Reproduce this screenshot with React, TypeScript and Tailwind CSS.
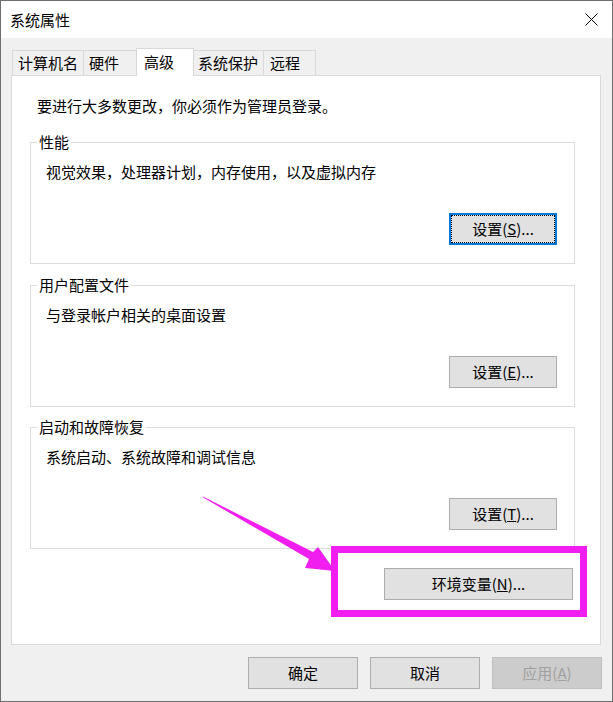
import React from "react";

function Btn({
  children,
  w,
  disabled,
  focused,
}: {
  children: React.ReactNode;
  w: string;
  disabled?: boolean;
  focused?: boolean;
}) {
  if (focused) {
    return (
      <div className={`${w} h-[32px] border-2 border-[#0078d7] bg-[#e1e1e1]`}>
        <div className="w-full h-full border border-dotted border-black flex items-center justify-center">
          {children}
        </div>
      </div>
    );
  }
  return (
    <div
      className={`${w} h-[32px] border flex items-center justify-center ${
        disabled
          ? "bg-[#cccccc] border-[#bfbfbf] text-[#a0a0a0]"
          : "bg-[#e1e1e1] border-[#adadad] text-black"
      }`}
    >
      {children}
    </div>
  );
}

function Group({
  title,
  desc,
  button,
  className,
}: {
  title: string;
  desc: string;
  button: React.ReactNode;
  className: string;
}) {
  return (
    <fieldset className={`w-[545px] ml-[18px] border border-[#dcdcdc] pb-[18px] ${className}`}>
      <legend className="ml-[6px] px-[2px] leading-[20px]">{title}</legend>
      <div className="mt-[10px] pl-[15px] leading-[20px]">{desc}</div>
      <div className="mt-[31px] flex justify-end pr-[17px]">{button}</div>
    </fieldset>
  );
}

export default function App() {
  return (
    <div className="relative w-[613px] h-[702px] border border-[#6e6e6e] bg-[#f0f0f0] flex flex-col font-['Noto_Sans_CJK_SC',sans-serif] text-[15px] leading-[20px] text-black overflow-hidden">
      {/* Title bar */}
      <div className="h-[37px] bg-white flex items-center pl-[9px] shrink-0">
        <span>系统属性</span>
        <svg className="ml-auto mr-[14px]" width="13" height="13" viewBox="0 0 13 13">
          <path d="M0.5 0.5 L12.5 12.5 M12.5 0.5 L0.5 12.5" stroke="#000" strokeWidth="1" fill="none" />
        </svg>
      </div>

      {/* Body */}
      <div className="flex-1 flex flex-col pt-[10px] pl-[10px] pr-[11px]">
        {/* Tabs */}
        <div className="flex items-start h-[27px]">
          <div className="ml-[1px] mt-[2px] w-[72px] h-[25px] border-l border-t border-r border-[#d9d9d9] pl-[5px] flex items-center">
            计算机名
          </div>
          <div className="mt-[2px] w-[52px] h-[25px] border-t border-[#d9d9d9] pl-[5px] flex items-center">
            硬件
          </div>
          <div className="relative z-10 w-[58px] h-[28px] border-l border-t border-r border-[#d9d9d9] bg-white pl-[7px] pb-[2px] flex items-center">
            高级
          </div>
          <div className="mt-[2px] w-[70px] h-[25px] border-t border-r border-[#d9d9d9] pl-[4px] flex items-center">
            系统保护
          </div>
          <div className="mt-[2px] w-[52px] h-[25px] border-t border-r border-[#d9d9d9] pl-[6px] flex items-center">
            远程
          </div>
        </div>

        {/* Panel */}
        <div className="w-[590px] h-[570px] border border-[#d9d9d9] bg-white flex flex-col">
          <div className="pt-[20px] pl-[25px]">要进行大多数更改，你必须作为管理员登录。</div>

          <Group
            className="mt-[16px]"
            title="性能"
            desc="视觉效果，处理器计划，内存使用，以及虚拟内存"
            button={
              <Btn w="w-[108px]" focused>
                设置(<span className="underline">S</span>)...
              </Btn>
            }
          />
          <Group
            className="mt-[11px]"
            title="用户配置文件"
            desc="与登录帐户相关的桌面设置"
            button={
              <Btn w="w-[108px]">
                设置(<span className="underline">E</span>)...
              </Btn>
            }
          />
          <Group
            className="mt-[10px]"
            title="启动和故障恢复"
            desc="系统启动、系统故障和调试信息"
            button={
              <Btn w="w-[108px]">
                设置(<span className="underline">T</span>)...
              </Btn>
            }
          />

          <div className="mt-[19px] self-end mr-[27px]">
            <Btn w="w-[189px]">
              环境变量(<span className="underline">N</span>)...
            </Btn>
          </div>
        </div>

        {/* Bottom buttons */}
        <div className="mt-[12px] flex justify-end gap-[12px] -mr-[1px]">
          <Btn w="w-[110px]">确定</Btn>
          <Btn w="w-[110px]">取消</Btn>
          <Btn w="w-[110px]" disabled>
            应用(<span className="underline">A</span>)
          </Btn>
        </div>
      </div>

      {/* Annotation arrow */}
      <svg
        className="absolute -left-px -top-px pointer-events-none z-20"
        width="613"
        height="702"
        viewBox="0 0 613 702"
      >
        <polygon
          points="202,496 313,552 318,547 335,571 305,568 309,559 204,498"
          fill="#f01ff0"
        />
      </svg>
      {/* Annotation highlight box */}
      <div className="absolute left-[330px] top-[545px] w-[256px] h-[71px] border-[7px] border-[#f01ff0] z-20 pointer-events-none" />
    </div>
  );
}
